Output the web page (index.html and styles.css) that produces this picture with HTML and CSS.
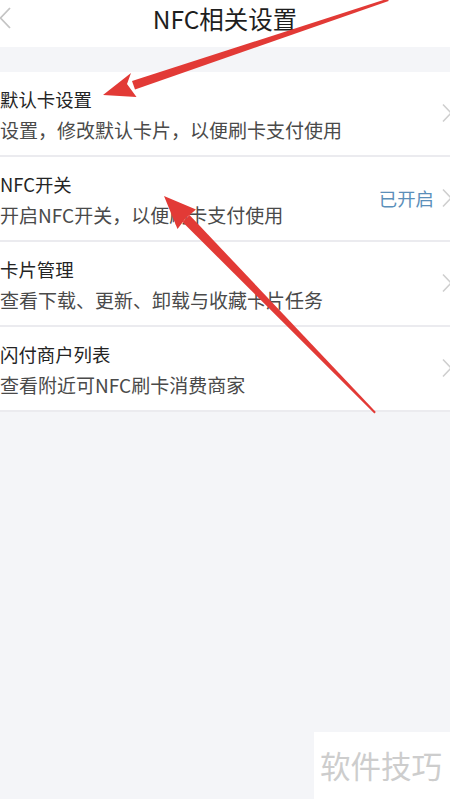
FILE: index.html
```html
<!DOCTYPE html>
<html lang="zh-CN">
<head>
<meta charset="utf-8">
<title>NFC相关设置</title>
<link rel="stylesheet" href="styles.css">
</head>
<body>
<div class="page">
  <header class="topbar">
    <svg class="back" width="13" height="22" viewBox="0 0 13 22"><path d="M11 1 L1.5 11 L11 21" fill="none" stroke="#c4c4c4" stroke-width="1.8"/></svg>
    <h1 class="title">NFC相关设置</h1>
  </header>
  <div class="spacer"></div>
  <ul class="list">
    <li class="row">
      <div class="texts">
        <div class="row-title">默认卡设置</div>
        <div class="row-sub">设置，修改默认卡片，以便刷卡支付使用</div>
      </div>
      <div class="right"><svg class="chev" width="10" height="20" viewBox="0 0 10 20"><path d="M1 1.5 L9 10 L1 18.5" fill="none" stroke="#cfcfcf" stroke-width="1.6"/></svg></div>
    </li>
    <li class="row">
      <div class="texts">
        <div class="row-title">NFC开关</div>
        <div class="row-sub">开启NFC开关，以便刷卡支付使用</div>
      </div>
      <div class="right"><span class="status">已开启</span><svg class="chev" width="10" height="20" viewBox="0 0 10 20"><path d="M1 1.5 L9 10 L1 18.5" fill="none" stroke="#cfcfcf" stroke-width="1.6"/></svg></div>
    </li>
    <li class="row">
      <div class="texts">
        <div class="row-title">卡片管理</div>
        <div class="row-sub">查看下载、更新、卸载与收藏卡片任务</div>
      </div>
      <div class="right"><svg class="chev" width="10" height="20" viewBox="0 0 10 20"><path d="M1 1.5 L9 10 L1 18.5" fill="none" stroke="#cfcfcf" stroke-width="1.6"/></svg></div>
    </li>
    <li class="row">
      <div class="texts">
        <div class="row-title">闪付商户列表</div>
        <div class="row-sub">查看附近可NFC刷卡消费商家</div>
      </div>
      <div class="right"><svg class="chev" width="10" height="20" viewBox="0 0 10 20"><path d="M1 1.5 L9 10 L1 18.5" fill="none" stroke="#cfcfcf" stroke-width="1.6"/></svg></div>
    </li>
  </ul>
  <div class="fill">
    <div class="watermark">软件技巧</div>
  </div>
  <svg class="arrows" width="450" height="799" viewBox="0 0 450 799">
    <polygon fill="#e23a36" points="388,-1.5 388.6,1 135,89.5 132,81"/>
    <polygon fill="#e23a36" points="103,95 131,73 127,84 136.5,97"/>
    <polygon fill="#e23a36" points="375.8,412 374.4,413.4 182.5,222 189.5,215"/>
    <polygon fill="#e23a36" points="164,196 196,209.5 185.5,218.5 177.5,229"/>
  </svg>
</div>
</body>
</html>
```
FILE: styles.css
```css
* { box-sizing: border-box; margin: 0; padding: 0; }
html, body { width: 450px; height: 799px; overflow: hidden; }
body {
  background: #f4f5f8;
  font-family: "Noto Sans CJK SC", "Noto Sans", sans-serif;
  color: #222;
}
.page {
  position: relative;
  width: 450px;
  height: 799px;
  display: flex;
  flex-direction: column;
}
.topbar {
  position: relative;
  height: 47px;
  background: #fff;
  display: flex;
  align-items: center;
  justify-content: center;
}
.back {
  position: absolute;
  left: -1px;
  top: 7px;
}
.title {
  font-size: 24.5px;
  font-weight: 400;
  line-height: 30px;
  color: #1e1e1e;
  margin-top: -9px;
}
.spacer { height: 25px; background: #f4f5f8; }
.list {
  list-style: none;
  background: #fff;
}
.row {
  height: 85px;
  border-bottom: 2px solid #ebebef;
  display: flex;
  align-items: stretch;
  justify-content: space-between;
}
.texts {
  padding-top: 15px;
  display: flex;
  flex-direction: column;
  gap: 7px;
}
.row-title {
  font-size: 18.4px;
  line-height: 24px;
  color: #242424;
}
.row-sub {
  font-size: 19px;
  line-height: 24px;
  color: #4a4a4a;
  white-space: nowrap;
}
.right {
  display: flex;
  align-items: center;
  gap: 8px;
  margin-right: -2px;
  padding-bottom: 2px;
}
.status {
  font-size: 18.4px;
  color: #5b8fba;
  line-height: 24px;
}
.fill {
  flex: 1;
  display: flex;
  align-items: flex-end;
  justify-content: flex-end;
}
.watermark {
  width: 136px;
  height: 67px;
  background: #fff;
  color: #cdcdcd;
  font-size: 30.5px;
  line-height: 67px;
  padding-left: 6px;
  white-space: nowrap;
}
.arrows {
  position: absolute;
  left: 0;
  top: 0;
  pointer-events: none;
}
```
